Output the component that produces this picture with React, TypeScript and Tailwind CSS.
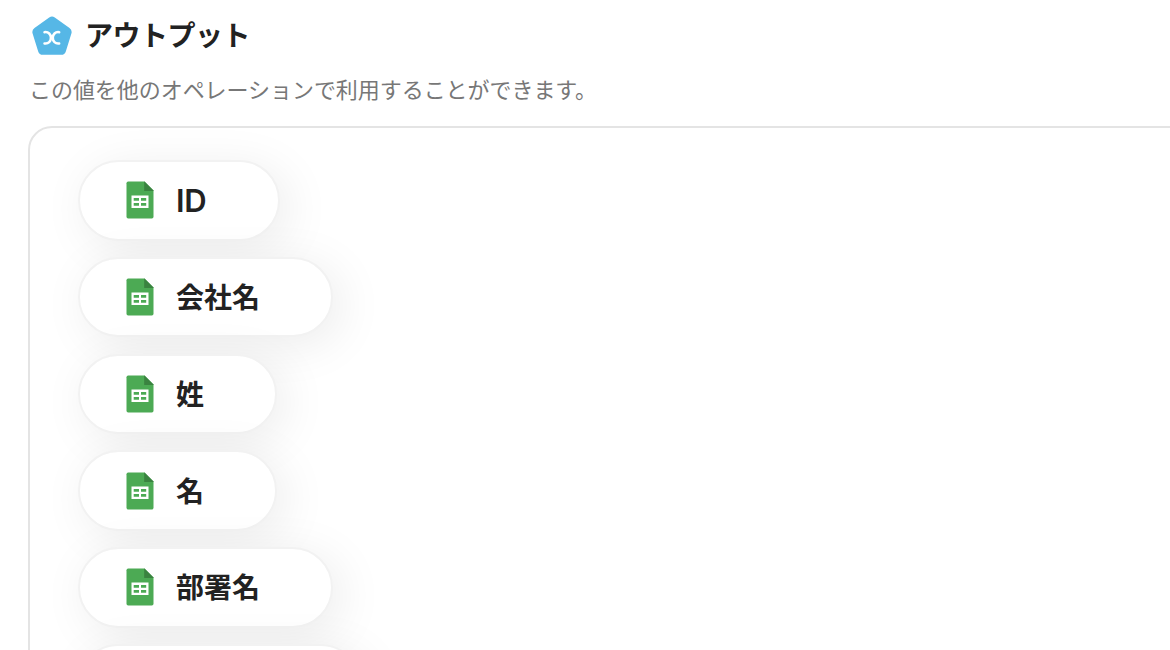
import clsx from "clsx";

interface OutputField {
  label: string;
  width: string;
  latin?: boolean;
}

const fields: OutputField[] = [
  { label: "ID", width: "w-[202px]", latin: true },
  { label: "会社名", width: "w-[255px]" },
  { label: "姓", width: "w-[199px]" },
  { label: "名", width: "w-[199px]" },
  { label: "部署名", width: "w-[255px]" },
  { label: "", width: "w-[283px]" },
];

function OutputIcon() {
  return (
    <svg className="h-10 w-10 shrink-0" viewBox="0 0 40 40" fill="none">
      <path
        d="M17.2 1.6Q20 -.4 22.8 1.6L37.5 12.1Q40.4 14.2 39.4 17.5L33.8 35.4Q32.7 38.8 29.2 38.8H10.8Q7.3 38.8 6.2 35.4L.6 17.5Q-.4 14.2 2.5 12.1Z"
        fill="#56b7e6"
      />
      <path
        d="M12.5 16.2C16.5 15.6 18.9 18.4 18.9 21.8S16.5 28 12.5 27.4M27.2 16.2C23.2 15.6 20.8 18.4 20.8 21.8S23.2 28 27.2 27.4"
        stroke="white"
        strokeWidth="2.5"
        strokeLinecap="round"
      />
    </svg>
  );
}

function SheetIcon() {
  return (
    <svg className="h-[38px] w-7 shrink-0" viewBox="0 0 28 38">
      <path d="M2.2.5H18.5L27.5 9.5V35.8Q27.5 37.5 25.8 37.5H2.2Q.5 37.5.5 35.8V2.2Q.5.5 2.2.5Z" fill="#4caa54" />
      <path d="M18.5.5L27.5 9.5V10H18.2V.5Z" fill="#3a8340" />
      <path d="M5.5 14.5H22.5V27H5.5ZM7.7 17V19.7H13V17ZM15 17V19.7H20.2V17ZM7.7 22V24.7H13V22ZM15 22V24.7H20.2V22Z" fill="white" fillRule="evenodd" />
    </svg>
  );
}

function FieldPill({ label, width, latin }: OutputField) {
  return (
    <div
      className={clsx(
        "flex h-[80.5px] shrink-0 items-center rounded-full border-2 border-[#f2f2f2] bg-white bg-clip-padding pl-[46px] shadow-[8px_8px_48px_rgba(0,0,0,0.08)]",
        width
      )}
    >
      <SheetIcon />
      {label && (
        <span
          className={clsx(
            "ml-[22px] leading-10 whitespace-nowrap text-[#222]",
            latin
              ? "pt-0.5 font-['Inter',sans-serif] text-[31px] font-semibold tracking-[-0.3px]"
              : "pb-0.5 font-['Noto_Sans_CJK_JP',sans-serif] text-[28px] font-bold"
          )}
        >
          {label}
        </span>
      )}
    </div>
  );
}

export default function App() {
  return (
    <main className="flex h-[650px] w-full flex-col overflow-hidden bg-white pl-7 font-['Noto_Sans_CJK_JP',sans-serif]">
      <header className="mt-4 flex h-10 shrink-0 items-center pl-1">
        <OutputIcon />
        <h1 className="ml-[13px] pb-1 text-[28px] leading-10 font-bold tracking-[-0.5px] text-[#222]">アウトプット</h1>
      </header>
      <p className="mt-4 h-[34px] shrink-0 pl-px text-[22px] leading-8 tracking-[-0.05px] text-[#777]">
        この値を他のオペレーションで利用することができます。
      </p>
      <section className="mt-5 -mr-10 flex h-[800px] shrink-0 flex-col items-start gap-[16.25px] rounded-tl-[24px] border-2 border-[#e4e4e4] pt-8 pl-12">
        {fields.map((field, i) => (
          <FieldPill key={i} {...field} />
        ))}
      </section>
    </main>
  );
}
